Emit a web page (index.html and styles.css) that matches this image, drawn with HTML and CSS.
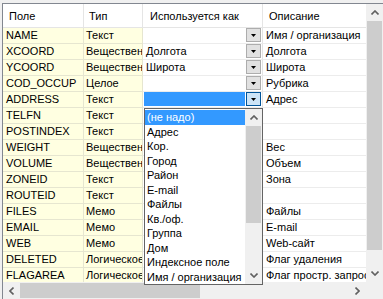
FILE: index.html
```html
<!DOCTYPE html>
<html lang="ru">
<head>
  <meta charset="UTF-8" />
  <title>Поля таблицы</title>
  <link rel="stylesheet" href="styles.css">
</head>
<body>
  <div class="grid-box">
    <div class="grid-main">
      <div class="grid">
        <div class="row head">
          <div class="cell c1">Поле</div>
          <div class="cell c2">Тип</div>
          <div class="cell c3">Используется как</div>
          <div class="cell c4">Описание</div>
        </div>
        <div class="row">
          <div class="cell c1">NAME</div>
          <div class="cell c2">Текст</div>
          <div class="cell c3"><span></span><span class="combo-btn"><svg width="5" height="3"><polygon points="0,0 5,0 2.5,3" fill="#000"/></svg></span></div>
          <div class="cell c4">Имя / организация</div>
        </div>
        <div class="row">
          <div class="cell c1">XCOORD</div>
          <div class="cell c2">Вещественное</div>
          <div class="cell c3"><span>Долгота</span><span class="combo-btn"><svg width="5" height="3"><polygon points="0,0 5,0 2.5,3" fill="#000"/></svg></span></div>
          <div class="cell c4">Долгота</div>
        </div>
        <div class="row">
          <div class="cell c1">YCOORD</div>
          <div class="cell c2">Вещественное</div>
          <div class="cell c3"><span>Широта</span><span class="combo-btn"><svg width="5" height="3"><polygon points="0,0 5,0 2.5,3" fill="#000"/></svg></span></div>
          <div class="cell c4">Широта</div>
        </div>
        <div class="row">
          <div class="cell c1">COD_OCCUP</div>
          <div class="cell c2">Целое</div>
          <div class="cell c3"><span></span><span class="combo-btn"><svg width="5" height="3"><polygon points="0,0 5,0 2.5,3" fill="#000"/></svg></span></div>
          <div class="cell c4">Рубрика</div>
        </div>
        <div class="row">
          <div class="cell c1">ADDRESS</div>
          <div class="cell c2">Текст</div>
          <div class="cell c3 editing"><span class="edit-value"></span><span class="combo-btn pressed"><svg width="5" height="3"><polygon points="0,0 5,0 2.5,3" fill="#000"/></svg></span></div>
          <div class="cell c4">Адрес</div>
        </div>
        <div class="row">
          <div class="cell c1">TELFN</div>
          <div class="cell c2">Текст</div>
          <div class="cell c3"></div>
          <div class="cell c4"></div>
        </div>
        <div class="row">
          <div class="cell c1">POSTINDEX</div>
          <div class="cell c2">Текст</div>
          <div class="cell c3"></div>
          <div class="cell c4"></div>
        </div>
        <div class="row">
          <div class="cell c1">WEIGHT</div>
          <div class="cell c2">Вещественное</div>
          <div class="cell c3"></div>
          <div class="cell c4">Вес</div>
        </div>
        <div class="row">
          <div class="cell c1">VOLUME</div>
          <div class="cell c2">Вещественное</div>
          <div class="cell c3"></div>
          <div class="cell c4">Объем</div>
        </div>
        <div class="row">
          <div class="cell c1">ZONEID</div>
          <div class="cell c2">Текст</div>
          <div class="cell c3"></div>
          <div class="cell c4">Зона</div>
        </div>
        <div class="row">
          <div class="cell c1">ROUTEID</div>
          <div class="cell c2">Текст</div>
          <div class="cell c3"></div>
          <div class="cell c4"></div>
        </div>
        <div class="row">
          <div class="cell c1">FILES</div>
          <div class="cell c2">Мемо</div>
          <div class="cell c3"></div>
          <div class="cell c4">Файлы</div>
        </div>
        <div class="row">
          <div class="cell c1">EMAIL</div>
          <div class="cell c2">Мемо</div>
          <div class="cell c3"></div>
          <div class="cell c4">E-mail</div>
        </div>
        <div class="row">
          <div class="cell c1">WEB</div>
          <div class="cell c2">Мемо</div>
          <div class="cell c3"></div>
          <div class="cell c4">Web-сайт</div>
        </div>
        <div class="row">
          <div class="cell c1">DELETED</div>
          <div class="cell c2">Логическое</div>
          <div class="cell c3"></div>
          <div class="cell c4">Флаг удаления</div>
        </div>
        <div class="row">
          <div class="cell c1">FLAGAREA</div>
          <div class="cell c2">Логическое</div>
          <div class="cell c3"></div>
          <div class="cell c4">Флаг простр. запроса</div>
        </div>
      </div>

      <!-- vertical scrollbar -->
      <div class="vscroll">
        <div class="sb-btn"><svg width="8" height="5"><polyline points="0.5,4.5 4,1 7.5,4.5" fill="none" stroke="#606060" stroke-width="1.6"/></svg></div>
        <div class="vthumb"></div>
        <div class="vtrack"></div>
        <div class="sb-btn"><svg width="8" height="5"><polyline points="0.5,0.5 4,4 7.5,0.5" fill="none" stroke="#606060" stroke-width="1.6"/></svg></div>
      </div>
    </div>

    <!-- horizontal scrollbar -->
    <div class="hscroll">
      <div class="sb-btn"><svg width="5" height="8"><polyline points="4.5,0.5 1,4 4.5,7.5" fill="none" stroke="#606060" stroke-width="1.6"/></svg></div>
      <div class="hthumb"></div>
      <div class="htrack"></div>
      <div class="sb-btn"><svg width="5" height="8"><polyline points="0.5,0.5 4,4 0.5,7.5" fill="none" stroke="#606060" stroke-width="1.6"/></svg></div>
      <div class="corner"></div>
    </div>

    <!-- open combo list -->
    <div class="dropdown">
      <ul class="items">
        <li class="selected">(не надо)</li>
        <li>Адрес</li>
        <li>Кор.</li>
        <li>Город</li>
        <li>Район</li>
        <li>E-mail</li>
        <li>Файлы</li>
        <li>Кв./оф.</li>
        <li>Группа</li>
        <li>Дом</li>
        <li>Индексное поле</li>
        <li>Имя / организация</li>
      </ul>
      <div class="list-scroll">
        <div class="sb-btn"><svg width="8" height="5"><polyline points="0.5,4.5 4,1 7.5,4.5" fill="none" stroke="#606060" stroke-width="1.6"/></svg></div>
        <div class="list-thumb"></div>
        <div class="vtrack"></div>
        <div class="sb-btn"><svg width="8" height="5"><polyline points="0.5,0.5 4,4 7.5,0.5" fill="none" stroke="#606060" stroke-width="1.6"/></svg></div>
      </div>
    </div>
  </div>
</body>
</html>
```

FILE: styles.css
```css
/* ------------------ Global ------------------ */
body {
  margin: 0;
  background: #f0f0f0;
  font-family: "Liberation Sans", Arial, sans-serif;
  font-size: 11px;
  color: #000;
  overflow: hidden;
}

.grid-box {
  position: relative;
  margin: 3px 0 0 2px;
  height: 296px;
  border-left: 1px solid #828790;
  border-top: 1px solid #828790;
  background: #fff;
  overflow: hidden;
}

.grid-main {
  display: flex;
  height: 278px;
}

/* ------------------ Grid ------------------ */
.grid {
  width: 363px;
  overflow: hidden;
  background: #fff;
}
.row {
  display: flex;
  height: 16px;
}
.cell {
  box-sizing: border-box;
  flex: none;
  height: 100%;
  padding-left: 3px;
  line-height: 15px;
  white-space: nowrap;
  overflow: hidden;
  border-right: 1px solid #e3e3e3;
  border-bottom: 1px solid #ececec;
}
.c1 { width: 81px; background: #ffffe1; border-color: #e6e6d0; }
.c2 { width: 59px; background: #ffffe1; padding-left: 2px; border-color: #e6e6d0; }
.c3 { width: 120px; display: flex; justify-content: space-between; padding-right: 1px; }
.c4 { width: 103px; border-right: none; }

.head {
  height: 24px;
}
.head .cell {
  background: #fff;
  line-height: 24px;
  padding-left: 6px;
  border-color: #e5e5e5;
}
.head .c2 { padding-left: 5px; }
.head .c3 { padding-left: 7px; }

.combo-btn {
  box-sizing: border-box;
  width: 15px;
  height: 14px;
  margin-top: 0;
  display: flex;
  align-items: center;
  justify-content: center;
  background: #e1e1e1;
  border: 1px solid #adadad;
}
.combo-btn.pressed {
  background: #cce4f7;
  border-color: #005499;
}
.cell.editing {
  padding-left: 1px;
}
.edit-value {
  flex: 1;
  margin: 0 1px 1px 0;
  background: #3399ff;
}

/* ------------------ Scrollbars ------------------ */
.vscroll {
  width: 17px;
  display: flex;
  flex-direction: column;
  background: #f0f0f0;
}
.sb-btn {
  flex: none;
  width: 17px;
  height: 17px;
  display: flex;
  align-items: center;
  justify-content: center;
  background: #f0f0f0;
}
.vthumb {
  height: 229px;
  margin: 0 1px;
  background: #cdcdcd;
}
.vtrack {
  flex: 1;
}
.hscroll {
  display: flex;
  height: 17px;
  background: #f0f0f0;
}
.hthumb {
  width: 180px;
  margin: 1px 0;
  background: #cdcdcd;
}
.htrack {
  flex: 1;
}
.corner {
  width: 17px;
  background: #f0f0f0;
}

/* ------------------ Dropdown list ------------------ */
.dropdown {
  position: absolute;
  left: 141px;
  top: 104px;
  width: 119px;
  height: 177px;
  box-sizing: border-box;
  display: flex;
  background: #fff;
  border: 1px solid #646464;
}
.items {
  list-style: none;
  margin: 0;
  padding: 1px 0 0;
  width: 100px;
}
.items li {
  height: 14.5px;
  line-height: 14px;
  padding-left: 2px;
  white-space: nowrap;
  overflow: hidden;
}
.items li.selected {
  background: #3399ff;
  color: #fff;
}
.list-scroll {
  width: 17px;
  display: flex;
  flex-direction: column;
  background: #f0f0f0;
}
.list-thumb {
  height: 97px;
  margin: 0 1px;
  background: #cdcdcd;
}
```
